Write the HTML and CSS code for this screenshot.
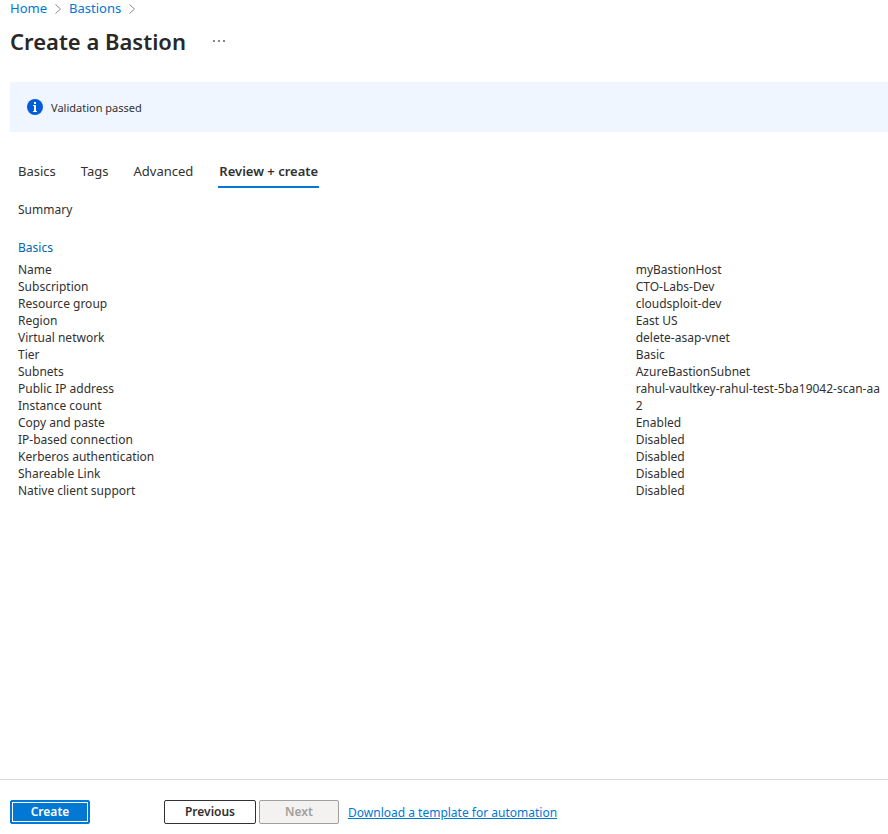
FILE: index.html
```html
<!DOCTYPE html>
<html lang="en">
<head>
<meta charset="utf-8">
<meta name="viewport" content="width=device-width, initial-scale=1">
<title>Create a Bastion</title>
<link rel="stylesheet" href="styles.css">
</head>
<body>
<div class="page">
  <header class="header">
    <nav class="breadcrumb" aria-label="Breadcrumb">
      <a href="#">Home</a>
      <svg class="chevron" viewBox="0 0 6 10" aria-hidden="true"><path d="M.5.5 5.5 5 .5 9.5"/></svg>
      <a href="#">Bastions</a>
      <svg class="chevron" viewBox="0 0 6 10" aria-hidden="true"><path d="M.5.5 5.5 5 .5 9.5"/></svg>
    </nav>
    <div class="title-row">
      <h1>Create a Bastion</h1>
      <button class="more" type="button" aria-label="More"><svg viewBox="0 0 12 2" aria-hidden="true"><path d="M0 0h2v2H0zM5 0h2v2H5zM10 0h2v2h-2z"/></svg></button>
    </div>
  </header>
  <div class="banner" role="status">
    <svg class="info" viewBox="0 0 16 16" aria-hidden="true"><circle cx="8" cy="8" r="8"/><path d="M7 3h2v2H7zM6 6h3v6h1v1H6v-1h1V7H6z"/></svg>
    <span>Validation passed</span>
  </div>
  <main class="content">
    <nav class="tabs" aria-label="Steps">
      <button type="button" class="tab">Basics</button>
      <button type="button" class="tab">Tags</button>
      <button type="button" class="tab">Advanced</button>
      <button type="button" class="tab active">Review + create</button>
    </nav>
    <h2>Summary</h2>
    <h3>Basics</h3>
    <table class="summary">
      <tbody>
        <tr><th scope="row">Name</th><td>myBastionHost</td></tr>
        <tr><th scope="row">Subscription</th><td>CTO-Labs-Dev</td></tr>
        <tr><th scope="row">Resource group</th><td>cloudsploit-dev</td></tr>
        <tr><th scope="row">Region</th><td>East US</td></tr>
        <tr><th scope="row">Virtual network</th><td>delete-asap-vnet</td></tr>
        <tr><th scope="row">Tier</th><td>Basic</td></tr>
        <tr><th scope="row">Subnets</th><td>AzureBastionSubnet</td></tr>
        <tr><th scope="row">Public IP address</th><td>rahul-vaultkey-rahul-test-5ba19042-scan-aa</td></tr>
        <tr><th scope="row">Instance count</th><td>2</td></tr>
        <tr><th scope="row">Copy and paste</th><td>Enabled</td></tr>
        <tr><th scope="row">IP-based connection</th><td>Disabled</td></tr>
        <tr><th scope="row">Kerberos authentication</th><td>Disabled</td></tr>
        <tr><th scope="row">Shareable Link</th><td>Disabled</td></tr>
        <tr><th scope="row">Native client support</th><td>Disabled</td></tr>
      </tbody>
    </table>
  </main>
  <footer class="footer">
    <button type="button" class="btn primary">Create</button>
    <button type="button" class="btn previous">Previous</button>
    <button type="button" class="btn next" disabled>Next</button>
    <a href="#">Download a template for automation</a>
  </footer>
</div>
</body>
</html>
```
FILE: styles.css
```css
* { box-sizing: border-box; }
body {
  margin: 0;
  background: #fff;
  color: #323130;
  font: 12px/17px "Noto Sans", sans-serif;
}
button { font: inherit; color: inherit; }
a { color: #0078d4; text-decoration: none; }
.page { display: flex; flex-direction: column; min-height: 100vh; overflow: hidden; }
.header { padding: 0 10px; }
.breadcrumb { display: flex; align-items: center; gap: 8px; height: 17px; font-size: 13px; }
.chevron { width: 6px; height: 10px; fill: none; stroke: #8a8886; }
.title-row { display: flex; align-items: center; gap: 21px; height: 48px; }
h1 { margin: 0; color: #292827; font-size: 22px; line-height: 30px; font-weight: 600; }
.more { display: flex; padding: 6px; border: 0; background: none; }
.more svg { width: 12px; height: 2px; fill: #8a8886; }
.banner {
  display: flex;
  align-items: center;
  gap: 8px;
  height: 50px;
  margin: 17px 0 0 10px;
  padding: 0 17px;
  background: #eff6ff;
  font-size: 11px;
}
.info { width: 16px; height: 16px; fill: #015cda; }
.info path { fill: #fff; }
.content { flex: 1; padding: 26px 0 0 18px; }
.tabs { display: flex; gap: 25px; }
.tab { height: 30px; padding: 0 0 2px; border: 0; border-bottom: 2px solid transparent; background: none; font-size: 13px; }
.tab.active { padding-left: 1px; padding-right: 1px; border-color: #0078d4; font-weight: 600; }
h2, h3 { margin: 0; font-size: 12px; font-weight: 400; }
h2 { margin-top: 13px; }
h3 { margin-top: 21px; color: #0065b3; }
.summary { width: 100%; margin-top: 5px; border-collapse: collapse; table-layout: fixed; }
.summary th, .summary td { padding: 0; font-weight: 400; text-align: left; white-space: nowrap; }
.summary th { width: 71%; }
.footer {
  display: flex;
  align-items: center;
  height: 55px;
  padding: 10px 10px 0;
  border-top: 1px solid #d9d9d9;
}
.btn { height: 24px; padding: 0 0 1px; border: 1px solid #323130; border-radius: 2px; background: #fff; font-weight: 600; }
.primary { width: 80px; margin-right: 74px; border-color: #0078d4; background: #0078d4; color: #fff; outline: 1px solid #fff; outline-offset: -3px; }
.previous { width: 92px; }
.next { width: 80px; margin: 0 9px 0 3px; border-color: #a19f9d; background: #f3f2f1; color: #a19f9d; }
.footer a { text-decoration: underline; }
```
